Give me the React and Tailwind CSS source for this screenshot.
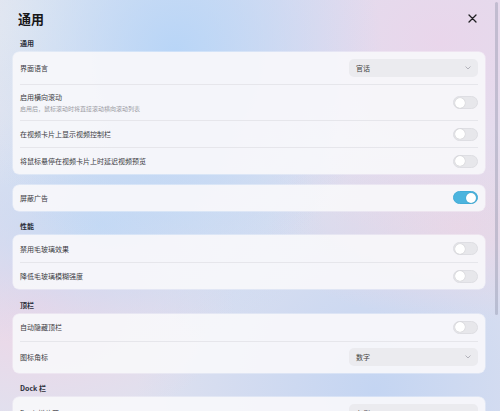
import { useState } from 'react'

const Toggle = ({ on }) => (
  <span
    className={`flex h-[13px] w-[25px] items-center rounded-full border px-[1px] ${
      on ? 'justify-end border-[#43acd8] bg-[#4cb4de]' : 'justify-start border-[#dedee3] bg-[#e7e7eb]'
    }`}
  >
    <span className="h-[10px] w-[10px] rounded-full bg-white shadow-[0_0_1px_rgba(0,0,0,0.25)]" />
  </span>
)

const Select = ({ value }) => (
  <div className="flex h-[18px] w-[129px] items-center justify-between rounded-[5px] bg-[#ebebef] pl-[7px] pr-[7px]">
    <span className="text-[7px] leading-none text-[#444]">{value}</span>
    <svg width="6" height="4" viewBox="0 0 6 4" fill="none">
      <path d="M0.8 0.8 L3 3 L5.2 0.8" stroke="#a5a5ad" strokeWidth="0.8" strokeLinecap="round" strokeLinejoin="round" />
    </svg>
  </div>
)

const Row = ({ label, sub, h, first, children }) => (
  <div className={`flex items-center justify-between ${h} ${first ? '' : 'border-t border-[#e6e6eb]'}`}>
    <div className="flex flex-col gap-[1.5px]">
      <span className="text-[7px] leading-[10px] text-[#3a3a3f]">{label}</span>
      {sub && <span className="text-[6px] leading-[9px] text-[#9a9aa2]">{sub}</span>}
    </div>
    {children}
  </div>
)

const Card = ({ children }) => (
  <div className="rounded-[6px] bg-[#f7f7fa]/95 px-[7px] shadow-[0_0_0_0.5px_rgba(255,255,255,0.6)]">{children}</div>
)

const Label = ({ children }) => (
  <div className="mb-[4px] pl-[7px] text-[7px] font-bold leading-[10px] text-[#2c2f3a]">{children}</div>
)

export default function App() {
  const [adBlock] = useState(true)

  return (
    <div className="relative h-[411px] w-[500px] overflow-hidden bg-[#dfe1ef] bg-[image:radial-gradient(ellipse_at_35%_13%,#b8d5f7_0%,transparent_45%),radial-gradient(ellipse_at_88%_10%,#e9d6eb_0%,transparent_38%),radial-gradient(ellipse_at_5%_5%,#e8eaf0_0%,transparent_30%),radial-gradient(ellipse_at_20%_55%,#c6daf4_0%,transparent_40%),radial-gradient(ellipse_at_92%_55%,#e8d7e7_0%,transparent_30%),radial-gradient(ellipse_at_8%_74%,#efd6e6_0%,transparent_30%),radial-gradient(ellipse_at_75%_95%,#c4d5f2_0%,transparent_45%)] font-['Noto_Sans_CJK_SC','Noto_Sans',sans-serif]">
      {/* Header */}
      <div className="flex h-[37px] items-center justify-between pl-[18px] pr-[23px]">
        <h1 className="text-[13px] font-bold leading-[16px] text-[#161618]">通用</h1>
        <svg width="9" height="9" viewBox="0 0 9 9" fill="none">
          <path d="M1 1 L8 8 M8 1 L1 8" stroke="#1f1f22" strokeWidth="1.3" strokeLinecap="round" />
        </svg>
      </div>

      <div className="flex flex-col gap-[10.5px] pl-[13px] pr-[15px] pt-[1px]">
        <div>
          <Label>通用</Label>
          <Card>
            <Row label="界面语言" h="h-[32px]" first>
              <Select value="官话" />
            </Row>
            <Row label="启用横向滚动" sub="启用后，鼠标滚动时将直接滚动横向滚动列表" h="h-[36px]">
              <Toggle />
            </Row>
            <Row label="在视频卡片上显示视频控制栏" h="h-[27px]">
              <Toggle />
            </Row>
            <Row label="将鼠标悬停在视频卡片上时延迟视频预览" h="h-[27px]">
              <Toggle />
            </Row>
          </Card>
        </div>

        <Card>
          <Row label="屏蔽广告" h="h-[26px]" first>
            <Toggle on={adBlock} />
          </Row>
        </Card>

        <div>
          <Label>性能</Label>
          <Card>
            <Row label="禁用毛玻璃效果" h="h-[27px]" first>
              <Toggle />
            </Row>
            <Row label="降低毛玻璃模糊强度" h="h-[27px]">
              <Toggle />
            </Row>
          </Card>
        </div>

        <div>
          <Label>顶栏</Label>
          <Card>
            <Row label="自动隐藏顶栏" h="h-[27px]" first>
              <Toggle />
            </Row>
            <Row label="图标角标" h="h-[32px]">
              <Select value="数字" />
            </Row>
          </Card>
        </div>

        <div>
          <Label>Dock 栏</Label>
          <Card>
            <Row label="Dock 栏位置" h="h-[32px]" first>
              <Select value="左侧" />
            </Row>
          </Card>
        </div>
      </div>

      {/* scrollbar thumb */}
      <div className="absolute right-[2px] top-[2px] h-[313px] w-[3px] rounded-full bg-[#8d90a8]/40" />
    </div>
  )
}
